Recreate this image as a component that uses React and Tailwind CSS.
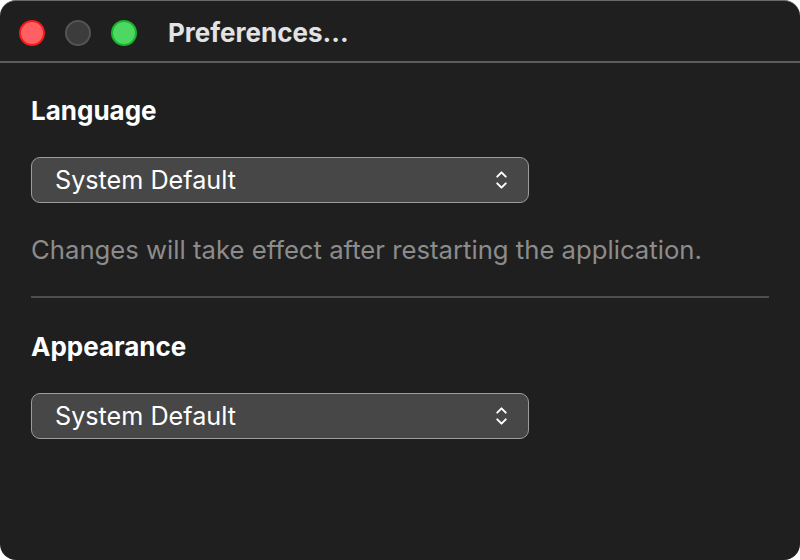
import { ChevronUp, ChevronDown } from "lucide-react"

function Select({ value }) {
  return (
    <div className="flex items-center justify-between w-[498px] h-[46px] rounded-[9px] border border-[#9c9c9c] bg-[#474747] pl-[23px] pr-[18px]">
      <span className="text-[25.2px] text-white leading-[30px]">{value}</span>
      <div className="flex flex-col items-center -space-y-[6px] text-white">
        <ChevronUp className="w-[17px] h-[17px]" strokeWidth={2.8} />
        <ChevronDown className="w-[17px] h-[17px]" strokeWidth={2.8} />
      </div>
    </div>
  )
}

export default function App() {
  return (
    <div className="w-[800px] h-[560px] bg-white" style={{ fontFamily: "Inter, 'Liberation Sans', sans-serif" }}>
      <div className="w-full h-full rounded-[16px] bg-[#1f1f1f] border-t border-[#6a6a6a] overflow-hidden flex flex-col">
        {/* Title bar */}
        <div className="h-[62px] flex items-center pl-[19px] pt-[4px] border-b-2 border-[#5c5c5c]">
          <div className="flex items-center gap-[20px]">
            <div className="w-[26px] h-[26px] rounded-full bg-[#ff6163] border-2 border-[#f41a1d]" />
            <div className="w-[26px] h-[26px] rounded-full bg-[#3c3c3c] border-2 border-[#545454]" />
            <div className="w-[26px] h-[26px] rounded-full bg-[#4cd862] border-2 border-[#17b52a]" />
          </div>
          <span className="ml-[31px] text-[26px] font-bold text-[#e3e3e3] leading-[30px]">Preferences...</span>
        </div>

        {/* Content */}
        <div className="px-[31px] pt-[33px] flex flex-col">
          <h2 className="text-[26px] font-bold text-white leading-[30px]">Language</h2>
          <div className="mt-[31px]">
            <Select value="System Default" />
          </div>
          <p className="mt-[32px] text-[25.7px] text-[#8c8c8c] leading-[30px]">
            Changes will take effect after restarting the application.
          </p>
          <div className="mt-[31px] h-[2px] bg-[#4e4e4e]" />
          <h2 className="mt-[34px] text-[26px] font-bold text-white leading-[30px]">Appearance</h2>
          <div className="mt-[31px]">
            <Select value="System Default" />
          </div>
        </div>
      </div>
    </div>
  )
}
